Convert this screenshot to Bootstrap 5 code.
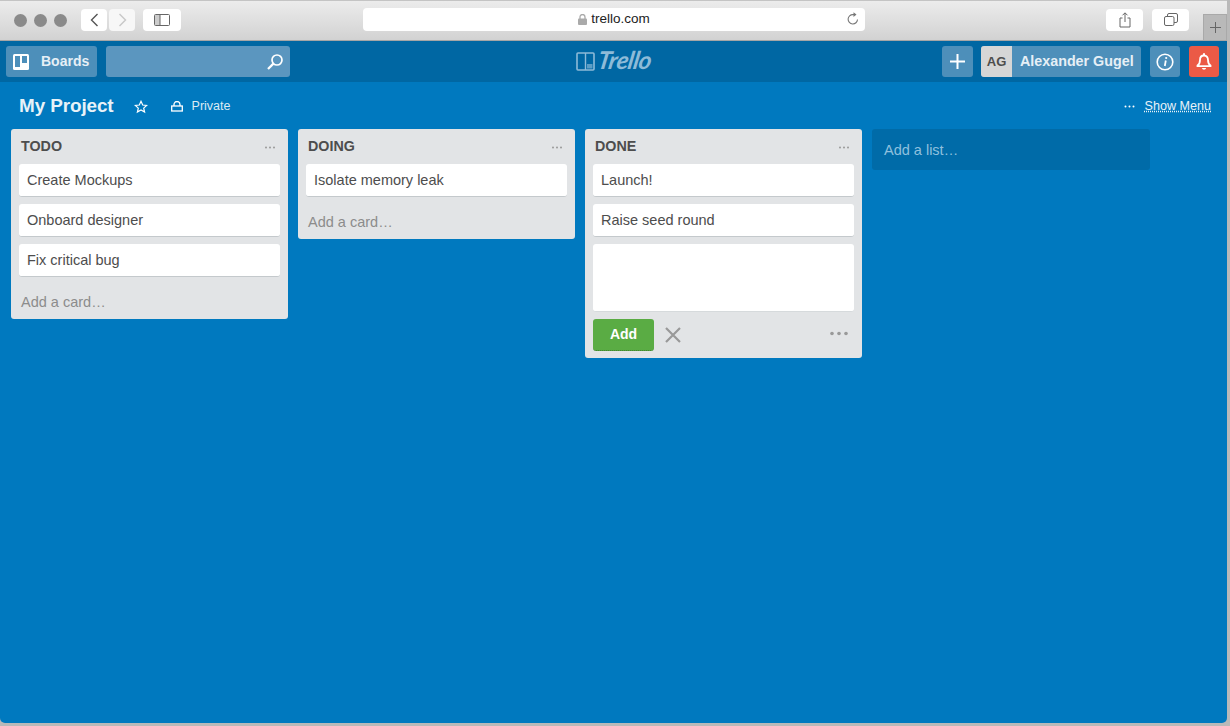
<!DOCTYPE html>
<html lang="en">
<head>
<meta charset="utf-8">
<title>My Project | Trello</title>
<link href="https://cdn.jsdelivr.net/npm/bootstrap@5.3.0/dist/css/bootstrap.min.css" rel="stylesheet">
<style>
html,body{height:100%;overflow:hidden}
body{background:#b9b9b9;font-family:"Liberation Sans",Arial,sans-serif;color:#4d4d4d;padding:0 3px 3px 0}
.shell{height:723px;overflow:hidden;border-radius:0 0 5px 5px}
.chrome{height:41px;flex:none;background:linear-gradient(#ececec,#d2d2d2);border-top:1px solid #c4c4c4;border-bottom:1px solid #a6a6a6;padding-left:14px}
.dot{width:13px;height:13px;border-radius:50%;background:#8a8a8a;flex:none}
.lights{gap:7px;margin-top:-1px;margin-right:14px}
.tool{height:22px;background:#fff;border-radius:4px;border:0;flex:none;padding:0;color:#555;margin-top:-2px}
.t-back{width:26px;margin-right:2px}
.t-fwd{width:26px;margin-right:8px;color:#ccc;background:#f7f7f7}
.t-side{width:38px;margin-right:182px}
.t-url{width:502px;height:23px;margin-right:241px;font-size:13.5px;color:#222;position:relative}
.t-reload{position:absolute;right:5px;top:4px}
.t-share{width:37px;margin-right:9px}
.t-tabs{width:37px}
.newtab{width:24px;height:26px;background:#b9b9b9;border:1px solid #a9a9a9;border-bottom:0;margin-left:14px;align-self:flex-end;margin-bottom:0}
.topbar{height:41px;flex:none;background:#0067a3;padding:5px 0 5px 6px}
.hbtn{height:31px;background:#4d8fba;border-radius:3px;color:#e6eff6;font-weight:700;font-size:14px;flex:none}
.h-boards{width:91px;padding-left:7px;gap:12px;margin-right:9px}
.h-search{width:184px;background:#5b96bf;justify-content:flex-end;padding-right:6px;margin-right:286px}
.brand{width:76px;color:#8dbbd8;gap:3px;margin-right:290px}
.brand-txt{font-family:"Lato",sans-serif;font-style:italic;font-weight:700;font-size:24.5px;letter-spacing:-.5px;line-height:1;transform:skewX(-10deg);white-space:nowrap;margin-top:-2px}
.h-plus{width:31px;margin-right:8px;justify-content:center}
.h-user{width:160px;margin-right:9px;overflow:hidden;font-size:14.3px}
.avatar{width:31px;height:31px;background:#d6d6d6;color:#4d4d4d;font-size:13px;margin-right:8px;flex:none}
.h-info{width:30px;margin-right:9px;justify-content:center}
.h-bell{width:30px;background:#eb5a46;justify-content:center}
.board{background:#0079bf;min-height:0}
.boardbar{height:47px;flex:none;padding:2px 16px 0 19px;color:#fff}
.b-title{font-size:18.9px;font-weight:700;color:#e8f2f8;margin-right:20px;letter-spacing:-.1px}
.b-star{margin-right:23px}
.b-lock{margin-right:9px}
.b-small{font-size:12.5px;color:#dcebf4}
.b-right{gap:9px}
.b-menu{font-size:12.6px;color:#e8f2f8;text-decoration:underline;text-decoration-style:dotted}
.lists{padding-left:11px;gap:10px;align-items:flex-start}
.tlist{width:277px;background:#e2e4e6;border-radius:3px;flex:none;padding:0 8px}
.tl-head{height:35px;padding:1px 0 0 2px}
.tl-title{font-size:14.3px;font-weight:700;color:#4d4d4d}
.tl-more{margin-right:5px}
.tcard{height:33px;background:#fff;border-radius:3px;border-bottom:1px solid #c4c9cc;font-size:14.5px;padding:1px 8px 0;margin-bottom:7px;color:#4d4d4d;line-height:31px;white-space:nowrap}
.t-add{height:42px;margin-top:-7px;padding:10px 2px 0;color:#8c8c8c;font-size:14.5px}
.composer{height:68px;background:#fff;border-radius:3px;border-bottom:1px solid #d6dadc;margin-bottom:7px}
.actions{height:39px;padding-bottom:7px}
.btn-add{width:61px;height:32px;background:#5aac44;color:#fff;font-size:14px;font-weight:700;border:0;border-bottom:1px dotted #3f7d2f;border-radius:3px;padding:0}
.t-x{margin-left:11px;margin-top:-1px}
.c-dots{margin-right:6px;margin-top:-3px}
.addlist{width:278px;height:41px;background:#006ba8;border-radius:3px;color:#8fc0de;font-size:14.5px;padding:2px 12px 0;flex:none}
</style>
</head>
<body>
<div class="shell d-flex flex-column">
  <div class="chrome d-flex align-items-center">
    <div class="lights d-flex"><span class="dot"></span><span class="dot"></span><span class="dot"></span></div>
    <button class="tool t-back d-flex align-items-center justify-content-center" aria-label="Back"><svg width="9" height="14" viewBox="0 0 9 14"><path d="M7.500 1 1.500 7l6 6" fill="none" stroke="#555" stroke-width="1.400"/></svg></button>
    <button class="tool t-fwd d-flex align-items-center justify-content-center" aria-label="Forward"><svg width="9" height="14" viewBox="0 0 9 14"><path d="M1.500 1l6 6-6 6" fill="none" stroke="#c8c8c8" stroke-width="1.400"/></svg></button>
    <button class="tool t-side d-flex align-items-center justify-content-center" aria-label="Sidebar"><svg width="16" height="12" viewBox="0 0 16 12"><rect x=".5" y=".5" width="15" height="11" rx="1" fill="none" stroke="#666"/><rect x="1" y="1" width="5" height="10" fill="#ccc"/><path d="M6 .5v11" stroke="#666"/></svg></button>
    <div class="tool t-url d-flex align-items-center justify-content-center gap-1">
      <svg width="9" height="11" viewBox="0 0 9 11"><rect y="4.500" width="9" height="6.500" rx="1" fill="#aaa"/><path d="M2 5V3a2.500 2.500 0 0 1 5 0v2" fill="none" stroke="#aaa" stroke-width="1.300"/></svg>
      <span>trello.com</span>
      <svg class="t-reload" width="14" height="14" viewBox="0 0 14 14"><path d="M11.500 7.500A4.700 4.700 0 1 1 7 2.600h2.500" fill="none" stroke="#777" stroke-width="1.100"/><path d="M7.500.3 10.500 2.600 7.500 4.900z" fill="#777"/></svg>
    </div>
    <button class="tool t-share d-flex align-items-center justify-content-center" aria-label="Share"><svg width="12" height="16" viewBox="0 0 12 16"><path d="M3.500 6H1v9h10V6H8.500M6 10V1M3.500 3.300 6 .8l2.500 2.500" fill="none" stroke="#666"/></svg></button>
    <button class="tool t-tabs d-flex align-items-center justify-content-center" aria-label="Tabs"><svg width="14" height="13" viewBox="0 0 14 13"><rect x=".5" y="3.500" width="9.500" height="9" rx="1.500" fill="none" stroke="#666"/><path d="M3.500 3.500v-1.500a1.500 1.500 0 0 1 1.500-1.500h7a1.500 1.500 0 0 1 1.500 1.500v6a1.500 1.500 0 0 1-1.500 1.500H10" fill="none" stroke="#666"/></svg></button>
    <div class="newtab d-flex align-items-center justify-content-center"><svg width="11" height="11" viewBox="0 0 11 11"><path d="M5.500 0v11M0 5.500h11" stroke="#666"/></svg></div>
  </div>

  <div class="topbar d-flex align-items-center">
    <div class="hbtn h-boards d-flex align-items-center">
      <svg width="16" height="16" viewBox="0 0 16 16"><rect width="16" height="16" rx="1.500" fill="#fff"/><rect x="2" y="2" width="5" height="11" fill="#4d8fba"/><rect x="9" y="2" width="5" height="7" fill="#4d8fba"/></svg>
      <span>Boards</span>
    </div>
    <div class="hbtn h-search d-flex align-items-center">
      <svg width="18" height="18" viewBox="0 0 18 18"><circle cx="11" cy="7" r="5" fill="none" stroke="#fff" stroke-width="1.700"/><path d="M7.400 10.600 2 16" stroke="#fff" stroke-width="2.200"/></svg>
    </div>
    <div class="brand d-flex align-items-center">
      <svg width="19" height="19" viewBox="0 0 19 19"><rect x="1" y="1" width="17" height="17" rx="1" fill="none" stroke="#8dbbd8" stroke-width="1.600"/><path d="M9.500 1v17" stroke="#8dbbd8" stroke-width="1.400"/><path d="M11 12h5.500v4.500H11z" fill="#8dbbd8" opacity=".65"/></svg>
      <span class="brand-txt">Trello</span>
    </div>
    <div class="hbtn h-plus d-flex align-items-center"><svg width="15" height="15" viewBox="0 0 15 15"><path d="M7.500 0v15M0 7.500h15" stroke="#fff" stroke-width="2"/></svg></div>
    <div class="hbtn h-user d-flex align-items-center">
      <span class="avatar d-flex align-items-center justify-content-center">AG</span>
      <span>Alexander Gugel</span>
    </div>
    <div class="hbtn h-info d-flex align-items-center"><svg width="18" height="18" viewBox="0 0 18 18"><circle cx="9" cy="9" r="7.800" fill="none" stroke="#fff" stroke-width="1.600"/><path d="M9.800 7.500 8.800 13" stroke="#fff" stroke-width="1.800"/><circle cx="10.200" cy="5" r="1.100" fill="#fff"/></svg></div>
    <div class="hbtn h-bell d-flex align-items-center"><svg width="16" height="18" viewBox="0 0 16 18"><path d="M8 2.500c-2.800 0-4 2-4 4.500 0 3-1 4.500-2.500 5.500v.7h13v-.7C13 11.500 12 10 12 7c0-2.500-1.200-4.500-4-4.500z" fill="none" stroke="#fff" stroke-width="1.800"/><rect x="7" y="0" width="2" height="3" rx="1" fill="#fff"/><path d="M5.800 15a2.300 2.300 0 0 0 4.400 0z" fill="#fff"/></svg></div>
  </div>

  <main class="board flex-grow-1 d-flex flex-column">
    <div class="boardbar d-flex align-items-center">
      <span class="b-title">My Project</span>
      <svg class="b-star" width="14" height="14" viewBox="0 0 14 14"><path d="M7 1.300 8.700 5l4 .4-3 2.700.9 4-3.600-2.100-3.600 2.100.9-4-3-2.700 4-.4z" fill="none" stroke="#fff" stroke-width="1.200"/></svg>
      <svg class="b-lock" width="12" height="11" viewBox="0 0 12 11"><rect x=".7" y="5" width="10.600" height="5" fill="none" stroke="#fff" stroke-width="1.300"/><path d="M3 5V3.500a3 3 0 0 1 6 0V5" fill="none" stroke="#fff" stroke-width="1.300"/></svg>
      <span class="b-small">Private</span>
      <span class="b-right ms-auto d-flex align-items-center">
        <svg width="11" height="3" viewBox="0 0 11 3"><circle cx="1.500" cy="1.500" r="1" fill="#fff"/><circle cx="5.500" cy="1.500" r="1" fill="#fff"/><circle cx="9.500" cy="1.500" r="1" fill="#fff"/></svg>
        <span class="b-menu">Show Menu</span>
      </span>
    </div>
    <div class="lists d-flex">
      <section class="tlist">
        <div class="tl-head d-flex align-items-center justify-content-between"><span class="tl-title">TODO</span><svg class="tl-more" width="10" height="3" viewBox="0 0 10 3"><circle cx="1" cy="1.500" r="1" fill="#999"/><circle cx="5" cy="1.500" r="1" fill="#999"/><circle cx="9" cy="1.500" r="1" fill="#999"/></svg></div>
        <div class="tcard">Create Mockups</div>
        <div class="tcard">Onboard designer</div>
        <div class="tcard">Fix critical bug</div>
        <div class="t-add d-flex align-items-center">Add a card…</div>
      </section>
      <section class="tlist">
        <div class="tl-head d-flex align-items-center justify-content-between"><span class="tl-title">DOING</span><svg class="tl-more" width="10" height="3" viewBox="0 0 10 3"><circle cx="1" cy="1.500" r="1" fill="#999"/><circle cx="5" cy="1.500" r="1" fill="#999"/><circle cx="9" cy="1.500" r="1" fill="#999"/></svg></div>
        <div class="tcard">Isolate memory leak</div>
        <div class="t-add d-flex align-items-center">Add a card…</div>
      </section>
      <section class="tlist">
        <div class="tl-head d-flex align-items-center justify-content-between"><span class="tl-title">DONE</span><svg class="tl-more" width="10" height="3" viewBox="0 0 10 3"><circle cx="1" cy="1.500" r="1" fill="#999"/><circle cx="5" cy="1.500" r="1" fill="#999"/><circle cx="9" cy="1.500" r="1" fill="#999"/></svg></div>
        <div class="tcard">Launch!</div>
        <div class="tcard">Raise seed round</div>
        <div class="composer"></div>
        <div class="actions d-flex align-items-center">
          <button class="btn-add">Add</button>
          <svg class="t-x" width="16" height="16" viewBox="0 0 16 16"><path d="M1 1l14 14M15 1 1 15" stroke="#999" stroke-width="2.200"/></svg>
          <svg class="c-dots ms-auto" width="18" height="5" viewBox="0 0 18 5"><circle cx="2" cy="2.500" r="1.800" fill="#999"/><circle cx="9" cy="2.500" r="1.800" fill="#999"/><circle cx="16" cy="2.500" r="1.800" fill="#999"/></svg>
        </div>
      </section>
      <div class="addlist d-flex align-items-center">Add a list…</div>
    </div>
  </main>
</div>
<script src="https://cdn.jsdelivr.net/npm/bootstrap@5.3.0/dist/js/bootstrap.bundle.min.js"></script>
</body>
</html>
